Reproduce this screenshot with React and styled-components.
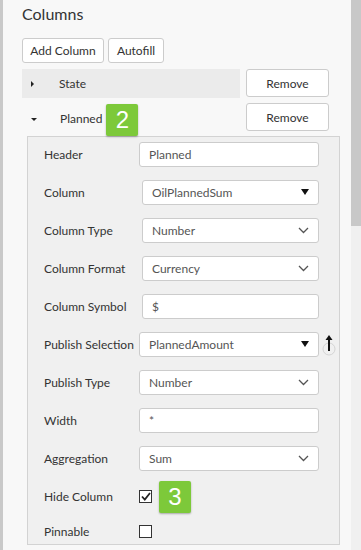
import React from "react";
import styled, { createGlobalStyle } from "styled-components";

const GlobalStyle = createGlobalStyle`
  html, body {
    margin: 0;
    padding: 0;
    background: #f8f8f8;
    font-family: Lato, "Noto Sans", sans-serif;
    color: #333;
    overflow: hidden;
  }
`;

const Page = styled.div`
  display: flex;
  width: 361px;
  height: 550px;
  overflow: hidden;
`;

const LeftEdge = styled.div`
  width: 3px;
  flex-shrink: 0;
  background: #c9c9c9;
`;

const Content = styled.div`
  flex: 1;
  padding: 0 0 0 19px;
  display: flex;
  flex-direction: column;
`;

const Scrollbar = styled.div`
  width: 10px;
  flex-shrink: 0;
  background: #f0f0f0;
`;

const Thumb = styled.div`
  height: 226px;
  background: #c8c8c8;
`;

const Title = styled.h2`
  margin: 0;
  height: 38px;
  font-size: 16px;
  font-weight: 400;
  line-height: 28px;
  color: #333;
`;

const Toolbar = styled.div`
  display: flex;
  gap: 4px;
  height: 25px;
  margin-bottom: 6px;
`;

const Button = styled.button`
  height: ${(p) => p.$height || 25}px;
  width: ${(p) => (p.$width ? `${p.$width}px` : "auto")};
  padding: 0;
  background: #fff;
  border: 1px solid #ccc;
  border-radius: 3px;
  font-family: inherit;
  font-size: 12px;
  color: #333;
`;

const ItemRow = styled.div`
  display: flex;
  gap: 6px;
  height: 29px;
  margin-bottom: ${(p) => p.$mb || 0}px;
`;

const Toggle = styled.div`
  width: 218px;
  display: flex;
  align-items: ${(p) => (p.$open ? "flex-start" : "center")};
  background: ${(p) => (p.$open ? "transparent" : "#ebebeb")};
  font-size: 12px;
  color: #333;
`;

const ToggleLabel = styled.span`
  line-height: 31px;
`;

const Caret = styled.span`
  width: 0;
  height: 0;
  margin: ${(p) => (p.$open ? "15px 23px 0 9px" : "0 25px 0 9px")};
  border-style: solid;
  ${(p) =>
    p.$open
      ? "border-width: 3.5px 3px 0 3px; border-color: #222 transparent transparent transparent;"
      : "border-width: 3px 0 3px 3.5px; border-color: transparent transparent transparent #222;"}
`;

const Badge = styled.span`
  position: relative;
  z-index: 1;
  display: flex;
  align-items: center;
  justify-content: center;
  width: 32px;
  height: 32px;
  margin: ${(p) => p.$margin || "0"};
  background: #7dc93a;
  border-radius: 2px;
  box-shadow: 0 1px 2px rgba(0, 0, 0, 0.3);
  color: #fff;
  font-family: "Liberation Sans", Arial, sans-serif;
  font-size: 24px;
  flex-shrink: 0;
`;

const Panel = styled.div`
  margin: 4px 0 0 5px;
  width: 313px;
  height: 409px;
  box-sizing: border-box;
  padding: 5px 0 0 16px;
  background: #f0f0f0;
  border: 1px solid #d3d3d3;
  display: flex;
  flex-direction: column;
  gap: 13px;
`;

const FieldRow = styled.div`
  display: flex;
  align-items: center;
  height: 25px;
  margin-top: ${(p) => p.$mt || 0}px;
`;

const Label = styled.label`
  width: 95px;
  flex-shrink: 0;
  white-space: nowrap;
  font-size: 12px;
  color: #333;
`;

const Box = styled.div`
  position: relative;
  box-sizing: border-box;
  width: ${(p) => (p.$indent ? 177 : 180)}px;
  margin-left: ${(p) => (p.$indent ? 3 : 0)}px;
  height: 25px;
  padding: 0 9px;
  display: flex;
  align-items: center;
  background: #fff;
  border: 1px solid #ccc;
  border-radius: 3px;
  font-size: 12px;
  color: #555;
`;

const Arrow = styled.span`
  margin-left: auto;
  display: flex;
`;

const Check = styled.span`
  box-sizing: border-box;
  width: 13px;
  height: 13px;
  background: #fff;
  border: 1px solid #333;
  display: flex;
  align-items: center;
  justify-content: center;
`;

const SideIcon = styled.span`
  display: flex;
  margin-left: 3px;
`;

const Solid = () => (
  <svg width="8" height="7" viewBox="0 0 8 7">
    <path d="M0 0 H8 L4 6 Z" fill="#111" />
  </svg>
);

const Chevron = () => (
  <svg width="11" height="7" viewBox="0 0 11 7">
    <path d="M1 1 L5.5 5.5 L10 1" fill="none" stroke="#555" strokeWidth="1.3" />
  </svg>
);

const UpArrow = () => (
  <svg width="14" height="22" viewBox="0 0 14 22">
    <circle cx="7" cy="15" r="6" fill="none" stroke="#d4d4d4" strokeWidth="1" />
    <path d="M7 17 V5" stroke="#111" strokeWidth="2" />
    <path d="M3.5 6 L7 1 L10.5 6 Z" fill="#111" />
  </svg>
);

const fields = [
  { label: "Header", value: "Planned" },
  { label: "Column", value: "OilPlannedSum", arrow: "solid", indent: true },
  { label: "Column Type", value: "Number", arrow: "chevron", indent: true },
  { label: "Column Format", value: "Currency", arrow: "chevron", indent: true },
  { label: "Column Symbol", value: "$", indent: true },
  { label: "Publish Selection", value: "PlannedAmount", arrow: "solid", side: true },
  { label: "Publish Type", value: "Number", arrow: "chevron" },
  { label: "Width", value: "*" },
  { label: "Aggregation", value: "Sum", arrow: "chevron" },
];

function Field({ label, value, arrow, indent, side }) {
  return (
    <FieldRow>
      <Label>{label}</Label>
      <Box $indent={indent}>
        {value}
        {arrow && (
          <Arrow>{arrow === "solid" ? <Solid /> : <Chevron />}</Arrow>
        )}
      </Box>
      {side && (
        <SideIcon>
          <UpArrow />
        </SideIcon>
      )}
    </FieldRow>
  );
}

export default function App() {
  return (
    <Page>
      <GlobalStyle />
      <LeftEdge />
      <Content>
        <Title>Columns</Title>
        <Toolbar>
          <Button $width={82}>Add Column</Button>
          <Button $width={56}>Autofill</Button>
        </Toolbar>
        <ItemRow $mb={5}>
          <Toggle>
            <Caret />
            <ToggleLabel>State</ToggleLabel>
          </Toggle>
          <Button $width={83} $height={28}>
            Remove
          </Button>
        </ItemRow>
        <ItemRow>
          <Toggle $open>
            <Caret $open />
            <ToggleLabel>Planned</ToggleLabel>
            <Badge $margin="1px 0 0 4px">2</Badge>
          </Toggle>
          <Button $width={83} $height={28}>
            Remove
          </Button>
        </ItemRow>
        <Panel>
          {fields.map((f) => (
            <Field key={f.label} {...f} />
          ))}
          <FieldRow>
            <Label>Hide Column</Label>
            <Check>
              <svg width="10" height="9" viewBox="0 0 10 9">
                <path d="M1 4.5 L3.8 7.5 L9 1" fill="none" stroke="#222" strokeWidth="1.8" />
              </svg>
            </Check>
            <Badge $margin="0 0 0 7px">3</Badge>
          </FieldRow>
          <FieldRow $mt={-3}>
            <Label>Pinnable</Label>
            <Check />
          </FieldRow>
        </Panel>
      </Content>
      <Scrollbar>
        <Thumb />
      </Scrollbar>
    </Page>
  );
}
